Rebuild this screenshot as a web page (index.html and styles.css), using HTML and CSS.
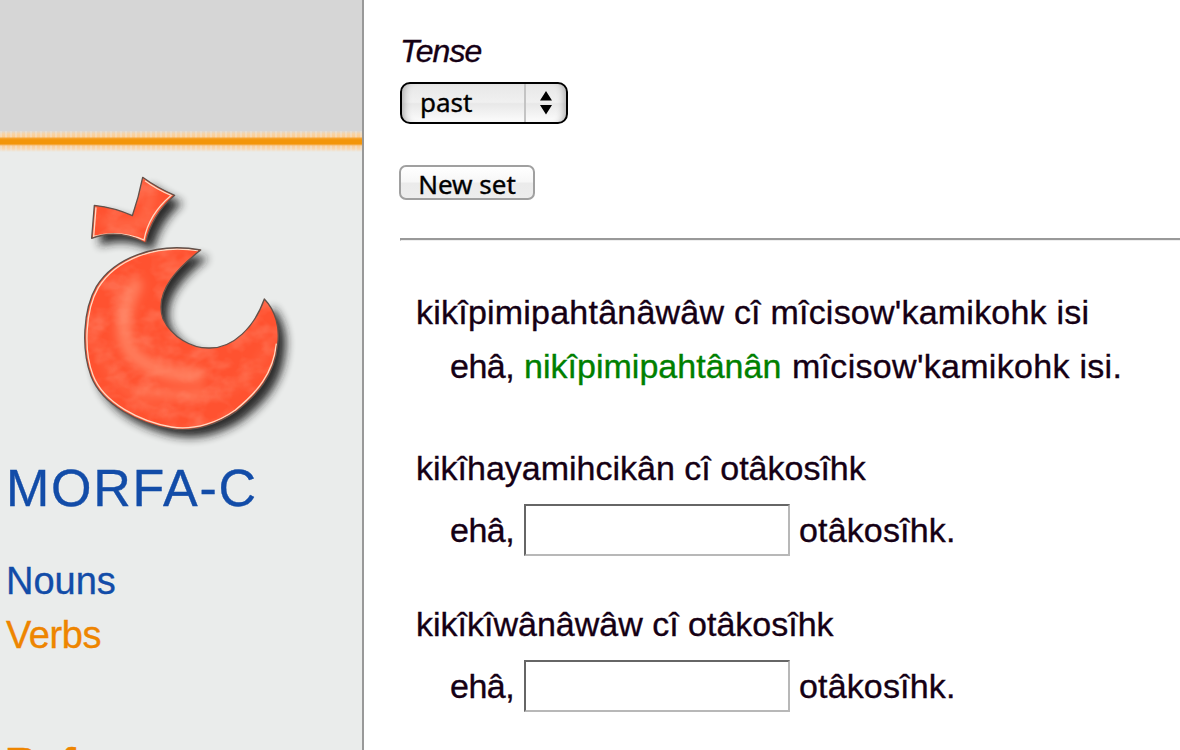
FILE: index.html
```html
<!DOCTYPE html>
<html lang="en">
<head>
<meta charset="utf-8">
<title>MORFA-C</title>
<link rel="stylesheet" href="styles.css">
</head>
<body>
<div class="page">
  <aside class="sidebar">
    <div class="banner"></div>
    <div class="stripe"></div>
    <svg class="logo" width="260" height="290" viewBox="0 0 780 870">
      <defs>
        <filter id="shadow" x="-20%" y="-20%" width="150%" height="150%"><feGaussianBlur stdDeviation="14"/></filter>
        <filter id="soft" x="-50%" y="-50%" width="200%" height="200%"><feGaussianBlur stdDeviation="15"/></filter>
        <filter id="grain" x="0" y="0" width="100%" height="100%">
          <feTurbulence type="fractalNoise" baseFrequency=".014 .02" numOctaves="3" seed="4"/>
          <feColorMatrix values="0 0 0 0 1  0 0 0 0 .62  0 0 0 0 .5  2.6 0 0 0 -1.05"/>
        </filter>
        <path id="check" d="M248 52 Q292 84 344 106 Q275 165 257 249 Q175 205 95 235 L103 136 Q165 143 217 167 Q236 112 248 52Z"/>
        <path id="moon" d="M422 270 C285 245 161 295 109 380 C68 450 64 570 93 648 C126 735 240 792 333 806 C407 819 480 788 528 755 C591 706 645 646 653 552 C660 504 647 452 613 417 C583 502 520 564 450 564 C395 566 335 531 309 476 C280 390 365 315 422 270Z"/>
        <clipPath id="moonclip"><use href="#moon"/></clipPath>
        <clipPath id="allclip"><use href="#moon"/><use href="#check"/></clipPath>
      </defs>
      <g fill="#1c1c1c" opacity=".93" filter="url(#shadow)" transform="translate(23 23)"><use href="#check"/><use href="#moon"/></g>
      <g fill="#ff5230"><use href="#check"/><use href="#moon"/></g>
      <g clip-path="url(#allclip)"><rect x="60" y="40" width="620" height="780" filter="url(#grain)" opacity=".2"/></g>
      <g fill="none" stroke="#ff9878" stroke-linecap="round" filter="url(#soft)" clip-path="url(#moonclip)">
        <path d="M225 375 Q160 510 220 585 Q300 650 410 645" stroke-width="46" opacity=".6"/>
        <path d="M245 690 Q350 715 430 700" stroke-width="30" opacity=".5"/>
        <path d="M130 590 Q170 700 300 750 M500 690 Q590 640 620 570" stroke-width="12" opacity=".4"/>
      </g>
      <path d="M275 90 Q265 160 240 190 Q180 200 125 180" fill="none" stroke="#ff8a6b" stroke-width="22" opacity=".5" filter="url(#soft)"/>
      <g fill="none" stroke="#ffd9c2" stroke-width="4">
        <path d="M255 62 Q290 88 334 106 Q266 163 252 240 Q180 208 101 229 L108 142"/>
        <path d="M414 272 C285 251 167 300 115 383 C76 450 70 570 99 646 C131 730 242 785 334 801 C407 813 480 783 526 750 C590 698 640 642 649 551"/>
      </g>
      <g fill="none" stroke="#62514a" stroke-width="4" stroke-linejoin="round"><use href="#check"/><use href="#moon"/></g>
    </svg>
    <h1 class="title">MORFA-C</h1>
    <nav class="nav">
      <a class="link">Nouns</a>
      <a class="link current">Verbs</a>
    </nav>
    <div class="section">Ref</div>
  </aside>
  <main class="main">
    <label class="label">Tense</label>
    <div class="select"><span class="value">past</span><span class="arrows"><svg width="12" height="24" viewBox="0 0 12 24"><path d="M0 9.5 6 0l6 9.5zM0 14h12L6 23.5z"/></svg></span></div>
    <button class="newset">New set</button>
    <hr class="rule">
    <div class="items">
      <div class="item first">
        <div class="question wide">kikîpimipahtânâwâw cî mîcisow'kamikohk isi</div>
        <div class="answer"><span class="lead">ehâ,</span><span class="correct">nikîpimipahtânân</span><span class="rest">mîcisow'kamikohk isi.</span></div>
      </div>
      <div class="item">
        <div class="question">kikîhayamihcikân cî otâkosîhk</div>
        <div class="answer gap"><span class="lead">ehâ,</span><input class="field" type="text"><span class="tail">otâkosîhk.</span></div>
      </div>
      <div class="item">
        <div class="question">kikîkîwânâwâw cî otâkosîhk</div>
        <div class="answer gap"><span class="lead">ehâ,</span><input class="field" type="text"><span class="tail">otâkosîhk.</span></div>
      </div>
    </div>
  </main>
</div>
</body>
</html>
```
FILE: styles.css
```css
* { box-sizing: border-box; }
body { margin: 0; overflow: hidden; background: #fff; font-family: "Liberation Sans", Arial, sans-serif; color: #150014; -webkit-text-stroke: .35px; }
.page { display: flex; height: 750px; overflow: hidden; }
.sidebar { flex: 0 0 364px; height: 750px; overflow: hidden; border-right: 2px solid #999; background: #eaeceb; }
.banner { height: 131px; background: #d6d6d6; }
.stripe {
  height: 21px;
  background:
    linear-gradient(to bottom, transparent 6px, #f5a638 7px, #f39508 9px, #f39508 13px, #f7b869 14px, transparent 15px),
    repeating-linear-gradient(to right, rgba(234,236,235,.35) 0 2px, transparent 2px 5px),
    linear-gradient(to bottom, #dcd8d3 0, #fad3a2 3px, #fbca8d 7px, #fbca8d 14px, #f8d8b3 18px, #eaeceb 21px);
}
.logo { display: block; margin: 8px 0 0 60px; }
.title { margin: 8px 0 0 6px; font-size: 52px; line-height: 60px; font-weight: 400; letter-spacing: 1.7px; color: #124ca8; }
.nav { display: flex; flex-direction: column; margin: 36px 0 0 6px; }
.link { font-size: 38px; line-height: 54px; color: #124ca8; }
.link.current { color: #ee8500; letter-spacing: -.4px; }
.section { margin: 77px 0 0 5px; font-size: 44px; line-height: 50px; font-weight: 700; color: #ee8500; }
.main { flex: 1; min-width: 0; padding: 31px 0 0 36px; }
.label { display: block; font-size: 32px; line-height: 40px; font-style: italic; letter-spacing: -.9px; }
.select {
  display: flex; width: 168px; height: 42px; margin-top: 11px;
  border: 2px solid #000; border-radius: 10px;
  background: linear-gradient(#e7e7e7, #f0f0f0 48%, #e8e8e8 52%, #fcfcfc);
  box-shadow: inset 8px 0 7px -6px #aaa, inset -8px 0 7px -6px #aaa;
  font: 26px/36px "Noto Sans", sans-serif; color: #000;
}
.value { width: 124px; padding-left: 18px; border-right: 2px solid #c4c4c4; }
.arrows { flex: 1; display: flex; align-items: center; justify-content: center; }
.newset {
  display: block; width: 136px; height: 35px; margin: 41px 0 0 -1px; padding: 2px 0 0;
  border: 2px solid #a0a0a0; border-radius: 7px;
  background: linear-gradient(#fff, #f7f7f7 48%, #ebebeb 52%, #ededed);
  font: 26px/30px "Noto Sans", sans-serif; color: #000;
}
.rule { margin: 38px 0 0; border: 0; border-top: 2px solid #999; border-bottom: 1px solid #eee; border-left: 1px solid #999; height: 3px; }
.items { padding: 44px 0 0 16px; font-size: 34px; line-height: 54px; white-space: nowrap; }
.item { margin-bottom: 40px; }
.item.first { margin-bottom: 48px; }
.question { height: 54px; }
.wide { letter-spacing: .22px; }
.rest { letter-spacing: .3px; }
.answer { display: flex; height: 54px; padding-left: 34px; }
.gap { align-items: center; margin-top: 8px; }
.lead { width: 74px; letter-spacing: -.5px; }
.correct { width: 268px; color: #008000; letter-spacing: .02px; }
.tail { letter-spacing: .15px; }
.field { width: 266px; height: 52px; margin: 0 9px 0 0; border: 2px solid; border-color: #666 #b8b8b8 #b8b8b8 #666; background: #fff; font: inherit; }
```
